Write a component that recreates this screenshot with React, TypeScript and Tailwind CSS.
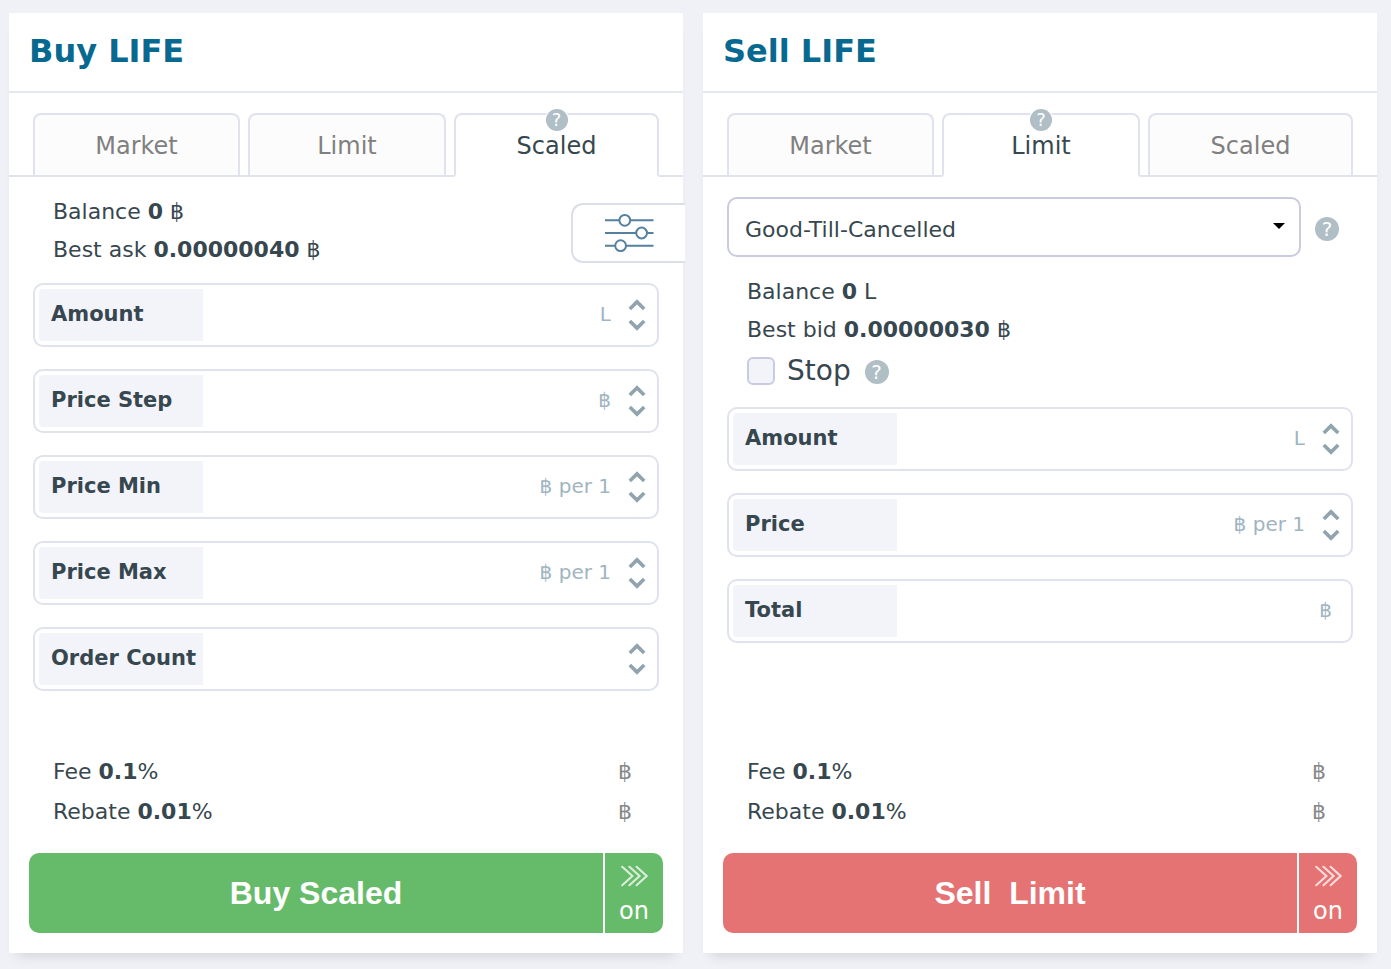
import { useId } from "react";
import type { ReactNode } from "react";
import clsx from "clsx";

const BAHT = "\u0E3F";

function Help({ className }: { className?: string }) {
  return (
    <button
      type="button"
      aria-label="Help"
      className={clsx(
        "flex shrink-0 items-center justify-center rounded-full bg-[#b0bec5] text-white",
        className,
      )}
    >
      ?
    </button>
  );
}

function Tabs({ active }: { active: string }) {
  return (
    <div
      role="tablist"
      className="grid grid-cols-[207fr_198fr_205fr] gap-2 border-b-2 border-[#e0e3ee] px-6 pt-5"
    >
      {["Market", "Limit", "Scaled"].map((name) => {
        const selected = name === active;
        return (
          <div key={name} className={clsx("relative", selected && "-mb-0.5")}>
            <button
              type="button"
              role="tab"
              aria-selected={selected}
              className={clsx(
                "w-full rounded-t-lg border-2 border-[#e0e3ee] pt-0.5 text-2xl",
                selected
                  ? "h-16 border-b-white bg-white text-[#37474f]"
                  : "h-[62px] border-b-0 bg-[#fcfcfd] text-[#808080]",
              )}
            >
              {name}
            </button>
            {selected && (
              <Help className="absolute -top-1 left-1/2 size-[22px] -translate-x-1/2 text-lg ring-1 ring-white" />
            )}
          </div>
        );
      })}
    </div>
  );
}

function Panel({ title, active, children }: { title: string; active: string; children: ReactNode }) {
  return (
    <section className="flex flex-col bg-white shadow-[0_10px_12px_-8px_rgba(0,0,0,0.14)]">
      <h2 className="border-b-2 border-[#e6e8f0] px-5 pt-[18px] pb-5 text-[32px] leading-10 font-bold text-[#07698f]">
        {title}
      </h2>
      <Tabs active={active} />
      {children}
    </section>
  );
}

function Stat({ label, value, unit }: { label: string; value: string; unit: string }) {
  return (
    <p className="leading-[38px]">
      {label} <b>{value}</b> {unit}
    </p>
  );
}

function Chevron({ up }: { up?: boolean }) {
  return (
    <svg width="18" height="12" viewBox="0 0 18 12" fill="none" stroke="#90a4ae" strokeWidth="3.6">
      <path d={up ? "M1.8 10 9 2.9 16.2 10" : "M1.8 2 9 9.1 16.2 2"} />
    </svg>
  );
}

function Field({ label, unit = "", spinner = true }: { label: string; unit?: string; spinner?: boolean }) {
  const id = useId();
  return (
    <div className="flex h-16 rounded-[10px] border-2 border-[#e0e3ee] p-1">
      <label
        htmlFor={id}
        className="flex w-[164px] shrink-0 items-center rounded-l bg-[#f3f4fa] pl-3 text-[21px] font-bold whitespace-nowrap"
      >
        {label}
      </label>
      <input
        id={id}
        placeholder={unit}
        className={clsx(
          "min-w-0 grow pb-0.5 text-right text-xl outline-none placeholder:text-[#9fb5c1]",
          spinner ? "pr-[17px]" : "pr-[15px]",
        )}
      />
      {spinner && (
        <div className="mr-[7px] flex flex-col justify-center gap-2">
          <button type="button" aria-label={`Increase ${label}`}>
            <Chevron up />
          </button>
          <button type="button" aria-label={`Decrease ${label}`}>
            <Chevron />
          </button>
        </div>
      )}
    </div>
  );
}

function Footer({ action, color }: { action: string; color: string }) {
  return (
    <div className="mt-auto pb-5">
      <dl className="px-11 pb-[21px] leading-10">
        {[
          ["Fee", "0.1"],
          ["Rebate", "0.01"],
        ].map(([name, rate]) => (
          <div key={name} className="flex justify-between pr-[7px]">
            <dt>
              {name} <b>{rate}</b>%
            </dt>
            <dd className="text-[#888888]">{BAHT}</dd>
          </div>
        ))}
      </dl>
      <div className="flex h-20 gap-0.5 px-5 text-white">
        <button
          type="button"
          className={clsx(
            "grow rounded-l-[10px] font-['Liberation_Sans',Arial,sans-serif] text-[32px] font-bold whitespace-pre",
            color,
          )}
        >
          {action}
        </button>
        <button
          type="button"
          className={clsx("flex w-[58px] flex-col items-center rounded-r-[10px] pt-3 text-2xl", color)}
        >
          <svg className="shrink-0" width="28" height="22" viewBox="0 0 28 22" fill="none" stroke="white" strokeWidth="2.1" strokeLinecap="round" opacity="0.75">
            <path d="M2.2 1.8 12.4 11 2.2 20.2M9.4 1.8 19.6 11 9.4 20.2M16.6 1.8 26.6 11 16.6 20.2" />
          </svg>
          <span className="mt-2 leading-8">on</span>
        </button>
      </div>
    </div>
  );
}

export default function App() {
  return (
    <main className="grid min-h-screen grid-cols-2 gap-5 bg-[#f0f1f7] pt-[13px] pr-[14px] pb-4 pl-[9px] font-['DejaVu_Sans',Verdana,sans-serif] text-[22px] text-[#37474f]">
      <Panel title="Buy LIFE" active="Scaled">
        <div className="flex items-start justify-between pt-4 pl-11">
          <div>
            <Stat label="Balance" value="0" unit={BAHT} />
            <Stat label="Best ask" value="0.00000040" unit={BAHT} />
          </div>
          <button
            type="button"
            aria-label="Order settings"
            className="mt-[10px] -mr-0.5 flex h-[60px] w-[114px] items-center rounded-l-xl border-2 border-r-0 border-[#dcdfea] bg-white pl-[31px]"
          >
            <svg width="50" height="40" viewBox="0 0 50 40" fill="white" stroke="#5580a0" strokeWidth="2">
              <path d="M1 7.3H49.5M1 20H49.5M1 32.7H49.5" />
              <circle cx="20.8" cy="7.3" r="5.4" />
              <circle cx="37.6" cy="20" r="5.4" />
              <circle cx="16.6" cy="32.7" r="5.4" />
            </svg>
          </button>
        </div>
        <div className="flex flex-col gap-[22px] px-6 pt-[14px] pb-8">
          <Field label="Amount" unit="L" />
          <Field label="Price Step" unit={BAHT} />
          <Field label="Price Min" unit={`${BAHT} per 1`} />
          <Field label="Price Max" unit={`${BAHT} per 1`} />
          <Field label="Order Count" />
        </div>
        <Footer action="Buy Scaled" color="bg-[#66bb6a]" />
      </Panel>

      <Panel title="Sell LIFE" active="Limit">
        <div className="flex items-center gap-[14px] pt-5 pr-[38px] pl-6">
          <div className="relative grow">
            <select
              aria-label="Time in force"
              className="h-[60px] w-full appearance-none rounded-[10px] border-2 border-[#c9cce0] bg-white px-4 pt-1 outline-none"
            >
              <option>Good-Till-Cancelled</option>
              <option>Immediate-Or-Cancel</option>
              <option>Fill-Or-Kill</option>
            </select>
            <svg className="pointer-events-none absolute top-[26px] right-4" width="12" height="6" viewBox="0 0 12 6">
              <path d="M0 0H12L6 6Z" fill="black" />
            </svg>
          </div>
          <Help className="mt-1 size-6 text-xl" />
        </div>
        <div className="px-11 pt-4">
          <Stat label="Balance" value="0" unit="L" />
          <Stat label="Best bid" value="0.00000030" unit={BAHT} />
          <div className="flex h-11 items-center">
            <label className="flex items-center gap-3 text-[28px]">
              <input
                type="checkbox"
                className="size-7 appearance-none rounded-md border-2 border-[#c9cce0] bg-[#f3f4fa]"
              />
              Stop
            </label>
            <Help className="mt-0.5 ml-[14px] size-6 text-xl" />
          </div>
        </div>
        <div className="flex flex-col gap-[22px] px-6 pt-[14px] pb-8">
          <Field label="Amount" unit="L" />
          <Field label="Price" unit={`${BAHT} per 1`} />
          <Field label="Total" unit={BAHT} spinner={false} />
        </div>
        <Footer action="Sell  Limit" color="bg-[#e57373]" />
      </Panel>
    </main>
  );
}
